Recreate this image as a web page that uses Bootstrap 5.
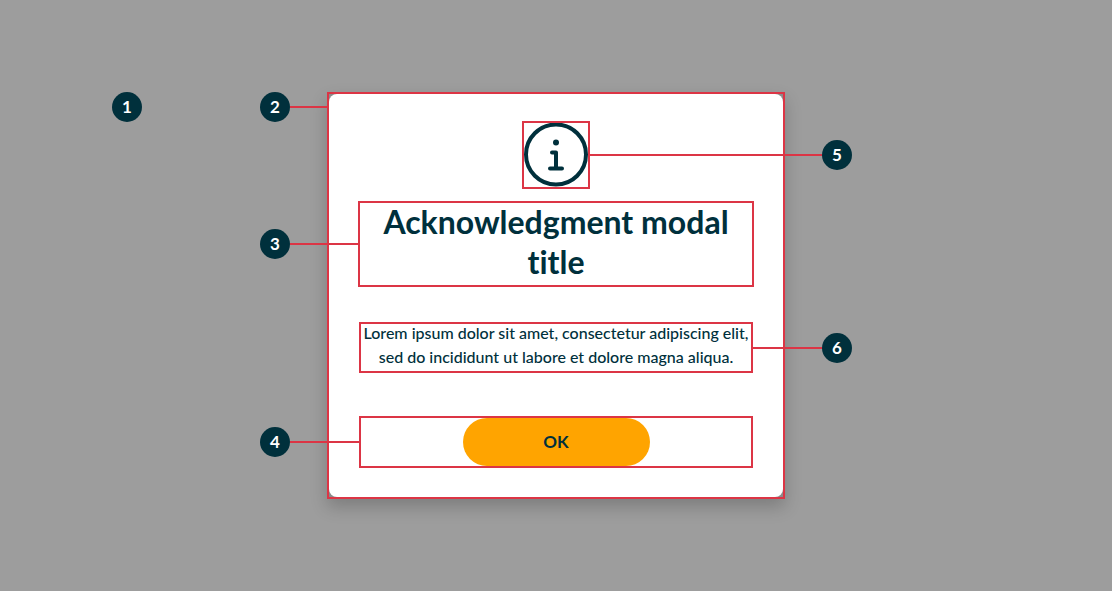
<!DOCTYPE html>
<html lang="en">
<head>
<meta charset="utf-8">
<meta name="viewport" content="width=device-width, initial-scale=1">
<title>Acknowledgment modal anatomy</title>
<link href="https://cdn.jsdelivr.net/npm/bootstrap@5.3.0/dist/css/bootstrap.min.css" rel="stylesheet">
<style>
  :root { --ink: #00303c; --outline: #dc3545; }
  body { background: #9d9d9d; color: var(--ink); font-family: Lato, "Open Sans", sans-serif; font-variant-ligatures: none; }
  .stage { padding-top: 92px; }
  .outlined { border: 2px solid var(--outline); }
  .dialog-frame { width: 458px; box-shadow: 0 8px 16px rgba(0, 0, 0, .2); background: #8b8b8b; }
  .dialog-panel { padding: 27px 29px 29px; border-radius: 8px; }
  .icon-part { width: 68px; margin-bottom: 12px; }
  .title-part { width: 396px; margin-bottom: 35px; }
  .title-part h1 { font-size: 32px; line-height: 40px; font-weight: 700; margin-top: -1px; padding-bottom: 3px; }
  .text-part { width: 394px; margin-bottom: 43px; }
  .text-part p { font-size: 16px; line-height: 24px; font-weight: 500; margin: -3px -8px 2px; }
  .action-part { width: 394px; }
  .btn-ok { width: 187px; height: 48px; background: #ffa400; color: var(--ink); font-size: 17px; font-weight: 700; }
  .btn-ok:hover { background: #f09a00; color: var(--ink); }
  .marker { flex: none; width: 30px; height: 30px; background: var(--ink); font-size: 17px; font-weight: 700; }
  .first-marker { margin-right: 118px; }
  .leader { height: 2px; background: var(--outline); width: 71px; }
  .leader-short { width: 39px; }
  .leader-title { width: 70px; }
  .leader-long { width: 234px; }
  .callout { position: absolute; top: 50%; transform: translateY(-50%); }
  .callout-left { right: 100%; }
  .callout-right { left: 100%; }
  .callout-top { top: -2px; transform: none; }
</style>
</head>
<body>
<main class="stage min-vh-100 d-flex justify-content-center align-items-start">
  <section class="dialog-frame outlined position-relative" role="dialog" aria-labelledby="dialog-title" aria-describedby="dialog-text">
    <div class="callout callout-left callout-top d-flex align-items-center">
      <span class="marker first-marker rounded-circle text-white d-flex align-items-center justify-content-center">1</span>
      <span class="marker rounded-circle text-white d-flex align-items-center justify-content-center">2</span>
      <span class="leader leader-short"></span>
    </div>
    <div class="dialog-panel bg-white d-flex flex-column align-items-center text-center">
      <div class="icon-part outlined position-relative">
        <svg class="d-block w-100" viewBox="0 0 64 64" fill="none" stroke="#00303c" aria-hidden="true">
          <circle cx="32" cy="31.5" r="30" stroke-width="4"/>
          <circle cx="32" cy="19.5" r="3" fill="#00303c" stroke="none"/>
          <path d="M28 29.5h4v16M26 45.5h12" stroke-width="4" stroke-linecap="round" stroke-linejoin="round"/>
        </svg>
        <div class="callout callout-right d-flex align-items-center">
          <span class="leader leader-long"></span>
          <span class="marker rounded-circle text-white d-flex align-items-center justify-content-center">5</span>
        </div>
      </div>
      <div class="title-part outlined position-relative">
        <h1 id="dialog-title" class="mb-0">Acknowledgment modal title</h1>
        <div class="callout callout-left d-flex align-items-center">
          <span class="marker rounded-circle text-white d-flex align-items-center justify-content-center">3</span>
          <span class="leader leader-title"></span>
        </div>
      </div>
      <div class="text-part outlined position-relative">
        <p id="dialog-text">Lorem ipsum dolor sit amet, consectetur adipiscing elit, sed do incididunt ut labore et dolore magna aliqua.</p>
        <div class="callout callout-right d-flex align-items-center">
          <span class="leader"></span>
          <span class="marker rounded-circle text-white d-flex align-items-center justify-content-center">6</span>
        </div>
      </div>
      <div class="action-part outlined position-relative d-flex justify-content-center">
        <button type="button" class="btn btn-ok rounded-pill border-0 p-0">OK</button>
        <div class="callout callout-left d-flex align-items-center">
          <span class="marker rounded-circle text-white d-flex align-items-center justify-content-center">4</span>
          <span class="leader"></span>
        </div>
      </div>
    </div>
  </section>
</main>
<script src="https://cdn.jsdelivr.net/npm/bootstrap@5.3.0/dist/js/bootstrap.bundle.min.js"></script>
</body>
</html>
